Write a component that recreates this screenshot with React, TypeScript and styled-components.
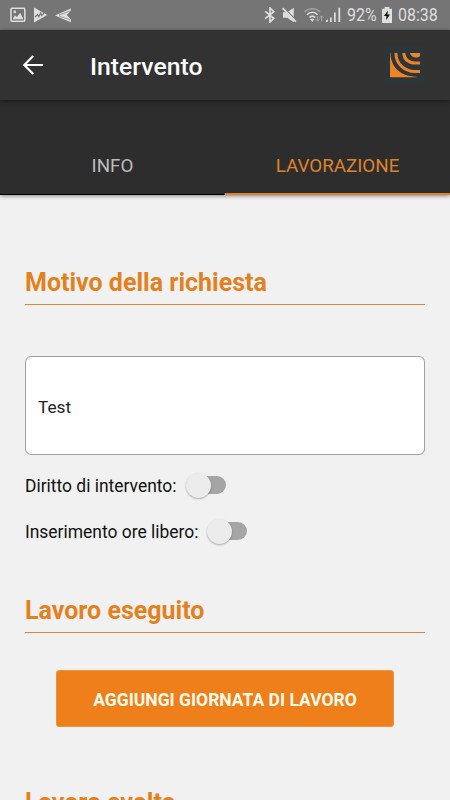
import React from "react";
import styled, { createGlobalStyle } from "styled-components";

const GlobalStyle = createGlobalStyle`
  * { box-sizing: border-box; }
  html, body { margin: 0; padding: 0; background: #f1f1f1; }
  body { font-family: Roboto, sans-serif; overflow: hidden; }
`;

const Screen = styled.div`
  width: 450px;
  height: 800px;
  overflow: hidden;
  display: flex;
  flex-direction: column;
  background: #f1f1f1;
`;

const StatusBar = styled.div`
  height: 30px;
  flex: none;
  background: #757575;
  color: #dedede;
  display: flex;
  align-items: center;
  justify-content: space-between;
  padding: 0 11px 0 10px;
`;

const StatusGroup = styled.div`
  display: flex;
  align-items: center;
`;

const Glyph = styled.svg<{ $gap?: number }>`
  display: block;
  flex: none;
  margin-right: ${(p) => p.$gap ?? 0}px;
`;

const StatusText = styled.span<{ $width: number; $gap?: number }>`
  display: block;
  width: ${(p) => p.$width}px;
  margin-right: ${(p) => p.$gap ?? 0}px;
  font-size: 18.5px;
  line-height: 30px;
  white-space: nowrap;
  transform: scaleX(0.865);
  transform-origin: left;
`;

const AppBar = styled.header`
  height: 70px;
  flex: none;
  background: #323232;
  display: flex;
  align-items: center;
  padding: 0 26px 0 22px;
  box-shadow: 0 1px 4px rgba(0, 0, 0, 0.5);
  z-index: 1;
`;

const BackButton = styled.button`
  width: 22px;
  height: 22px;
  padding: 0;
  border: 0;
  background: none;
`;

const Title = styled.h1`
  margin: 3px auto 0 46px;
  color: #fff;
  font-size: 24.8px;
  font-weight: 500;
  line-height: 30px;
`;

const Tabs = styled.nav`
  height: 95px;
  flex: none;
  display: flex;
  background: #2d2d2d;
  box-shadow: 0 1px 4px rgba(0, 0, 0, 0.45);
`;

const Tab = styled.div<{ $active?: boolean }>`
  flex: 1;
  display: flex;
  align-items: flex-end;
  justify-content: center;
  padding-bottom: ${(p) => (p.$active ? 16 : 17)}px;
  border-bottom: ${(p) => (p.$active ? "2px solid #e0812c" : "1px solid #000")};
  color: ${(p) => (p.$active ? "#de832e" : "#bcbcbc")};
  font-size: 18.8px;
  line-height: 22px;
`;

const Content = styled.main`
  padding: 67px 25px 0;
  display: flex;
  flex-direction: column;
`;

const Heading = styled.h2<{ $top?: number }>`
  margin: ${(p) => p.$top ?? 0}px 0 0;
  height: 43px;
  flex: none;
  padding-top: 6px;
  border-bottom: 1px solid #d88a35;
  color: #e3811f;
  font-size: 25px;
  font-weight: 700;
  line-height: 30px;
`;

const Field = styled.div`
  margin-top: 51px;
  height: 99px;
  border: 1px solid #a0a0a0;
  border-radius: 6px;
  background: #fff;
  padding: 2px 12px 0;
  display: flex;
  align-items: center;
  font-size: 17.2px;
  color: #222;
`;

const SwitchRow = styled.div<{ $top: number }>`
  margin-top: ${(p) => p.$top}px;
  height: 30px;
  display: flex;
  align-items: center;
  gap: 9px;
  color: #111;
  font-size: 17.45px;
`;

const SwitchLabel = styled.span`
  padding-top: 2px;
`;

const Track = styled.span`
  width: 35px;
  height: 18px;
  margin-left: 5px;
  border-radius: 9px;
  background: #a5a5a5;
  display: flex;
  align-items: center;
`;

const Thumb = styled.span`
  flex: none;
  width: 25px;
  height: 25px;
  margin-left: -5px;
  border-radius: 50%;
  background: #ececec;
  box-shadow: 0 1px 2px rgba(0, 0, 0, 0.3);
`;

const PrimaryButton = styled.button`
  margin: 37px 31px 0;
  height: 57px;
  flex: none;
  padding: 2px 0 0;
  border: 1px solid #e99545;
  border-radius: 3px;
  background: #ee7f1b;
  color: #fffbe8;
  font-family: inherit;
  font-size: 17.5px;
  font-weight: 700;
  white-space: nowrap;
`;

const SwitchLine = ({ label, top }: { label: string; top: number }) => (
  <SwitchRow $top={top}>
    <SwitchLabel>{label}</SwitchLabel>
    <Track role="switch" aria-checked={false}>
      <Thumb />
    </Track>
  </SwitchRow>
);

const Notifications = () => (
  <StatusGroup>
    <Glyph $gap={8} width="16" height="16" viewBox="0 0 16 16">
      <rect x="1" y="1.2" width="13.8" height="13" rx="1" fill="none" stroke="#dedede" strokeWidth="1.5" />
      <path d="M2.6 12.3 5 8.2l2 1.9 3.2-4.3 3.2 6.5z" fill="#dedede" />
      <circle cx="4.8" cy="4.9" r="1.3" fill="#dedede" />
    </Glyph>
    <Glyph $gap={7} width="14" height="16" viewBox="0 0 14 16">
      <path d="M0 .4 13.3 8 0 15.4z" fill="#dedede" />
      <path d="m1 10.2 2.5-2.7 1.2 2.2 2-3.7 1 2.5 2.3-2.3" fill="none" stroke="#757575" strokeWidth="1.2" />
    </Glyph>
    <Glyph width="17" height="15" viewBox="0 0 17 15">
      <path d="M0 7.5 15.7.5l.4 2.1L11.8 7l4.4 4.8-.6 2.4z" fill="#dedede" />
      <path d="M4 7.1 15.8 2.8M4 7.9l11.8 4.3" stroke="#757575" strokeWidth=".6" />
    </Glyph>
  </StatusGroup>
);

const SystemStatus = () => (
  <StatusGroup>
    <Glyph $gap={6} width="12" height="16" viewBox="0 0 12 16">
      <path d="m1.2 4.3 8.6 7L6 15V1l3.8 3.7-8.6 7" fill="none" stroke="#dedede" strokeWidth="1.7" />
    </Glyph>
    <Glyph $gap={7} width="15" height="16" viewBox="0 0 15 16">
      <path d="M1 5.3h4.2L11.8.8v14.4l-6.6-4.4H1z" fill="#dedede" />
      <path d="m1 .2 13.5 13.4" stroke="#757575" strokeWidth="1.5" />
      <path d="m.6 1.2 13.2 13.4" stroke="#dedede" strokeWidth="1.8" />
    </Glyph>
    <Glyph $gap={2} width="20" height="16" viewBox="0 0 20 16">
      <g fill="none" strokeWidth="1.6">
        <path d="M.6 5C4.7.6 12 .6 16 5" stroke="#a3a3a3" />
        <path d="M3 7.7c3-3.2 7.7-3.2 10.6 0M5.5 10.4c1.7-1.7 4-1.7 5.7 0" stroke="#dedede" />
      </g>
      <path d="m6 12.3 2.3 2.5 2.3-2.5c-1.4-1.2-3.2-1.2-4.6 0z" fill="#dedede" />
      <path d="M13.7 9v5m-1.8-1.7 1.8 1.9 1.8-1.9M17.5 14.3V9m-1.8 1.8 1.8-1.9 1.8 1.9" fill="none" stroke="#a8a8a8" />
    </Glyph>
    <Glyph $gap={6} width="15" height="16" viewBox="0 0 15 16">
      <path d="M0 15v-1.8l1.8-.9V15zM4 15v-4.6h1.7V15zM8 15V5.5h1.7V15zM12.4 15V.7h1.8V15z" fill="#dedede" />
    </Glyph>
    <StatusText $width={30} $gap={5}>92%</StatusText>
    <Glyph $gap={6} width="10" height="16" viewBox="0 0 10 16">
      <path d="M2.6 0h4.8v1.8H10V16H0V1.8h2.6z" fill="#dedede" />
      <path d="M6 3.5 1.9 9h2.6L4 13.2 8 7.6H5.4z" fill="#111" />
    </Glyph>
    <StatusText $width={41}>08:38</StatusText>
  </StatusGroup>
);

const Logo = () => (
  <Glyph width="39" height="38" viewBox="0 0 39 38">
    <rect width="39" height="38" fill="#2b353a" />
    <svg x="5" y="7" width="30" height="24.5" viewBox="0 0 30 24.5">
      <g fill="none" stroke="#ee8326" strokeWidth="3">
        <path d="M13.8 0C13.8 6 18.5 10 25 10h5" />
        <path d="M5.9 0C5.9 11 14.7 18.4 25 18.4h5" />
      </g>
      <path d="M19.8 0H30v3C27.5 5.7 21.5 5.2 19.8 0zM0 0h.5c0 12 8 23.2 26 23.8v.7H0z" fill="#ee8326" />
    </svg>
  </Glyph>
);

export default function App() {
  return (
    <>
      <GlobalStyle />
      <Screen>
        <StatusBar>
          <Notifications />
          <SystemStatus />
        </StatusBar>
        <AppBar>
          <BackButton aria-label="Indietro">
            <Glyph width="22" height="22" viewBox="0 0 22 22">
              <path d="M21 11H2.6M11.2 2 2.3 11l8.9 9" fill="none" stroke="#fff" strokeWidth="2.2" />
            </Glyph>
          </BackButton>
          <Title>Intervento</Title>
          <Logo />
        </AppBar>
        <Tabs>
          <Tab>INFO</Tab>
          <Tab $active>LAVORAZIONE</Tab>
        </Tabs>
        <Content>
          <Heading>Motivo della richiesta</Heading>
          <Field>Test</Field>
          <SwitchLine label="Diritto di intervento:" top={15} />
          <SwitchLine label="Inserimento ore libero:" top={16} />
          <Heading $top={44}>Lavoro eseguito</Heading>
          <PrimaryButton>AGGIUNGI GIORNATA DI LAVORO</PrimaryButton>
          <Heading $top={55}>Lavoro svolto</Heading>
        </Content>
      </Screen>
    </>
  );
}
